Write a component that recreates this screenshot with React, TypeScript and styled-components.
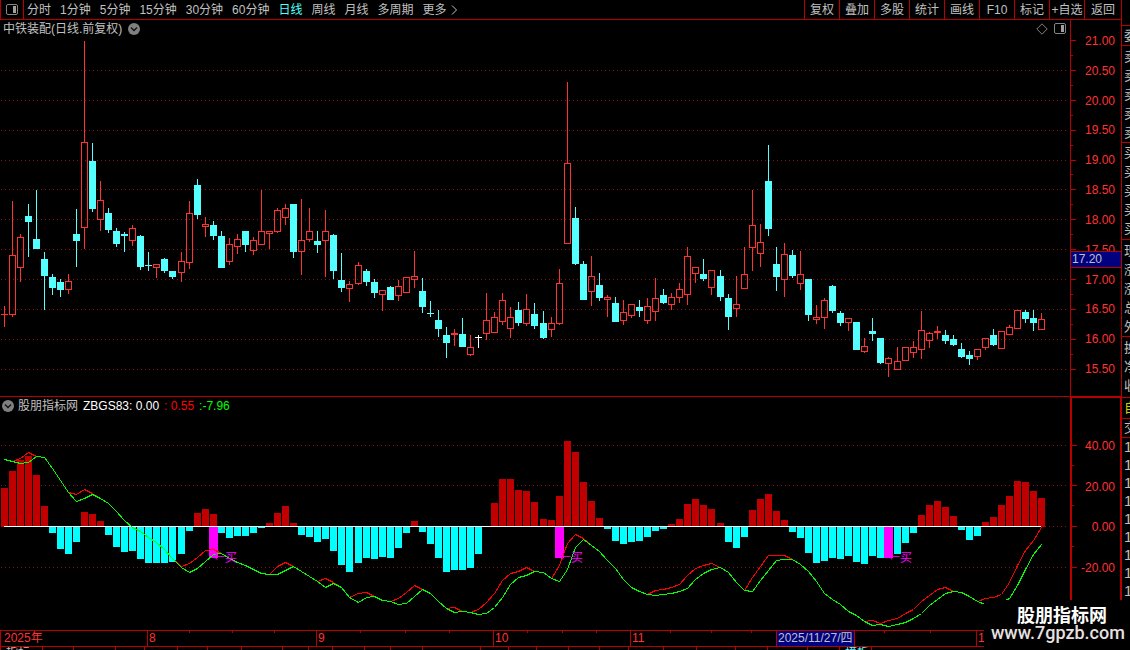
import React from "react";
import styled, { createGlobalStyle } from "styled-components";

const LINE = "#b80000";
const UP = "#ff3232";
const DOWN = "#54ffff";
const TEXT = "#c0c0c0";
const NAVY = "#000080";

const GlobalStyle = createGlobalStyle`
  * { box-sizing: border-box; }
  body {
    margin: 0;
    background: #000;
    color: ${TEXT};
    font: 12px/12px "Liberation Sans", "Noto Sans CJK SC", sans-serif;
  }
`;

/* Page frame */

const Page = styled.div`
  position: relative;
  display: flex;
  background: #000;
  overflow: hidden;
`;

const Main = styled.main`
  flex: 1;
  min-width: 0;
  display: flex;
  flex-direction: column;
`;

/* Toolbar */

const Toolbar = styled.header`
  display: flex;
  justify-content: space-between;
  height: 20px;
  border-bottom: 1px solid ${LINE};
`;

const PlainButton = styled.button`
  display: inline-flex;
  align-items: center;
  justify-content: center;
  padding: 0;
  border: 0;
  background: none;
  color: inherit;
  font: inherit;
  white-space: nowrap;
`;

const LayoutToggle = styled(PlainButton)`
  width: 24px;
  border: solid ${LINE};
  border-width: 0 1px;
`;

const Periods = styled.nav`
  display: flex;
  align-items: stretch;
`;

const PeriodList = styled.div`
  display: flex;
  gap: 9px;
  padding-left: 3px;
`;

const PeriodButton = styled(PlainButton)<{ $active?: boolean }>`
  color: ${(p) => (p.$active ? DOWN : TEXT)};
  gap: 4px;
`;

const Tools = styled.nav`
  display: flex;
`;

const ToolButton = styled(PlainButton)`
  width: 35px;
  border-left: 1px solid ${LINE};

  &:last-child {
    width: 37px;
  }
`;

/* Chart panes */

const Pane = styled.section<{ $divided?: boolean }>`
  display: flex;
  border-top: ${(p) => (p.$divided ? `1px solid ${LINE}` : "0")};
`;

const Plot = styled.div`
  flex: 1;
  min-width: 0;
  display: flex;
  flex-direction: column;
`;

const PlotHeader = styled.div<{ $compact?: boolean }>`
  display: flex;
  align-items: center;
  gap: ${(p) => (p.$compact ? 5 : 6)}px;
  height: ${(p) => (p.$compact ? 17 : 18)}px;
  padding: 0 3px 0 ${(p) => (p.$compact ? 2 : 3)}px;
  white-space: nowrap;
`;

const PlotTitle = styled.h1`
  margin: 0;
  font: inherit;
`;

const PlotTools = styled.div`
  display: flex;
  align-items: center;
  gap: 6px;
  margin-left: auto;
`;

const IndicatorLabel = styled.div`
  display: flex;
  gap: 4px;
  align-items: center;
`;

const Reading = styled.span<{ $color: string }>`
  color: ${(p) => p.$color};
`;

const ChartSvg = styled.svg`
  display: block;
  width: 100%;
`;

const Axis = styled.div<{ $heavy?: boolean }>`
  position: relative;
  display: grid;
  width: 51px;
  padding-right: ${(p) => (p.$heavy ? 0 : 1)}px;
  border: solid ${LINE};
  border-width: ${(p) => (p.$heavy ? "1px 1px 0 2px" : "0 0 0 1px")};
`;

const AxisTicks = styled.svg`
  grid-area: 1 / 1;
  display: block;
  width: 6px;
`;

const AxisLabels = styled.div<{ $top: number; $bottom: number }>`
  grid-area: 1 / 1;
  display: flex;
  flex-direction: column;
  justify-content: space-between;
  padding: ${(p) => p.$top}px 5px ${(p) => p.$bottom}px 0;
  color: ${UP};
  text-align: right;
`;

const PriceCursor = styled.div`
  position: absolute;
  left: 0;
  right: 0;
  top: 231px;
  height: 17px;
  padding-left: 1px;
  border: solid ${LINE};
  border-width: 1px 0;
  background: ${NAVY};
  line-height: 15px;
`;

/* Time axis */

const columns = (spans: number[]) => spans.map((s) => `${s}fr`).join(" ");

const TimeAxis = styled.div`
  display: grid;
  height: 17px;
  border: solid ${LINE};
  border-width: 1px 0;
`;

const TimeCells = styled.div<{ $spans: number[] }>`
  grid-area: 1 / 1;
  display: grid;
  grid-template-columns: ${(p) => columns(p.$spans)};
`;

const TimeCell = styled.div<{ $current?: boolean }>`
  min-width: 0;
  padding-left: 1px;
  border-left: 1px solid ${LINE};
  background: ${(p) => (p.$current ? NAVY : "transparent")};
  color: ${(p) => (p.$current ? TEXT : UP)};
  line-height: 15px;
  white-space: nowrap;

  &:first-child {
    padding-left: 3px;
  }
`;

const TimeTicks = styled.svg`
  grid-area: 1 / 1;
  display: block;
  width: 100%;
  height: 2px;
`;

const TabStrip = styled.div<{ $spans: number[] }>`
  display: grid;
  grid-template-columns: ${(p) => columns(p.$spans)};
  height: 3px;
  overflow: hidden;
`;

const TabCell = styled.div<{ $lit?: boolean }>`
  min-width: 0;
  padding-left: 5px;
  border-left: 1px solid ${LINE};
  color: ${(p) => (p.$lit ? DOWN : TEXT)};
  white-space: nowrap;
`;

/* Quote column */

const Side = styled.aside`
  width: 9px;
  padding-top: 25px;
  border-left: 1px solid ${LINE};
  overflow: hidden;
`;

const SideGroup = styled.div<{ $height: number; $color?: string; $size?: number; $top?: number }>`
  height: ${(p) => p.$height}px;
  padding: ${(p) => p.$top ?? 0}px 0 0 2px;
  border-top: 1px solid ${LINE};
  color: ${(p) => p.$color ?? TEXT};
  font-size: ${(p) => p.$size ?? 13}px;
  overflow: hidden;
`;

const SideRow = styled.div<{ $height: number }>`
  height: ${(p) => p.$height}px;
  line-height: ${(p) => p.$height}px;
`;

/* Site mark */

const SiteMark = styled.div`
  position: absolute;
  right: 0;
  bottom: 0;
  width: 146px;
  height: 50px;
  padding: 4px 0 0 7px;
  background: #000;
  color: #fff;
`;

const SiteName = styled.div`
  padding-left: 26px;
  font: bold 18px/20px "Noto Sans CJK SC", sans-serif;
`;

const SiteUrl = styled.div`
  color: #e8e0e0;
  font: 500 18px/18px Roboto, sans-serif;
`;

/* Data: one entry per trading day */

type Kind = "r" | "c" | "w";
type Candle = [Kind, number, number, number, number];

// kind, high, body top, body bottom, low
const CANDLES: Candle[] = [
  ["r", 306, 314, 315, 327], ["r", 201, 255, 315, 317], ["r", 234, 237, 268, 282],
  ["c", 204, 216, 222, 257], ["c", 190, 239, 249, 249], ["c", 252, 259, 276, 310],
  ["c", 274, 277, 288, 295], ["c", 279, 282, 290, 297], ["r", 274, 281, 290, 294],
  ["c", 209, 234, 241, 267], ["r", 41, 142, 228, 249], ["c", 143, 161, 209, 212],
  ["r", 181, 200, 220, 231], ["c", 208, 213, 230, 233], ["c", 228, 231, 244, 247],
  ["c", 232, 234, 236, 252], ["r", 225, 228, 241, 246], ["c", 235, 236, 267, 270],
  ["c", 252, 265, 266, 271], ["r", 264, 264, 268, 278], ["c", 258, 259, 271, 273],
  ["c", 271, 271, 277, 279], ["r", 252, 261, 273, 282], ["r", 201, 213, 263, 269],
  ["c", 179, 185, 215, 219], ["r", 217, 224, 227, 237], ["c", 221, 225, 236, 240],
  ["c", 231, 236, 268, 268], ["r", 238, 244, 262, 265], ["r", 234, 239, 247, 254],
  ["c", 231, 231, 245, 252], ["r", 237, 240, 251, 255], ["r", 190, 231, 245, 245],
  ["r", 231, 231, 234, 249], ["r", 208, 210, 232, 233], ["r", 204, 208, 218, 225],
  ["c", 204, 204, 252, 258], ["r", 199, 240, 252, 275], ["r", 208, 231, 240, 242],
  ["c", 231, 241, 245, 253], ["r", 210, 231, 241, 277], ["c", 234, 235, 271, 279],
  ["c", 253, 280, 288, 292], ["r", 281, 284, 289, 302], ["r", 262, 265, 284, 285],
  ["c", 269, 271, 282, 286], ["c", 279, 282, 293, 298], ["r", 290, 290, 295, 311],
  ["c", 286, 287, 300, 300], ["r", 280, 286, 296, 301], ["r", 277, 277, 293, 293],
  ["r", 251, 276, 280, 288], ["c", 278, 291, 307, 313], ["c", 301, 313, 314, 317],
  ["c", 310, 320, 329, 337], ["c", 327, 335, 343, 358], ["r", 329, 333, 335, 346],
  ["c", 318, 334, 347, 347], ["r", 335, 347, 355, 356], ["w", 335, 337, 338, 348],
  ["r", 293, 320, 334, 340], ["r", 312, 317, 333, 333], ["r", 293, 300, 322, 325],
  ["r", 307, 317, 329, 338], ["c", 302, 310, 323, 326], ["r", 294, 309, 324, 326],
  ["c", 303, 314, 326, 329], ["c", 311, 323, 338, 339], ["r", 317, 323, 330, 337],
  ["r", 269, 283, 324, 325], ["r", 82, 163, 244, 244], ["c", 207, 218, 264, 265],
  ["c", 261, 264, 300, 300], ["r", 256, 276, 292, 306], ["c", 273, 285, 298, 301],
  ["r", 295, 297, 300, 317], ["c", 297, 303, 322, 322], ["r", 300, 312, 321, 325],
  ["r", 304, 304, 316, 318], ["c", 300, 307, 311, 317], ["r", 298, 306, 321, 324],
  ["r", 278, 298, 312, 321], ["c", 289, 295, 303, 304], ["r", 293, 297, 305, 310],
  ["r", 283, 289, 298, 303], ["r", 247, 256, 295, 305], ["r", 267, 267, 274, 283],
  ["c", 259, 274, 279, 281], ["r", 270, 270, 288, 295], ["c", 270, 276, 297, 301],
  ["c", 294, 298, 317, 330], ["r", 276, 304, 309, 317], ["r", 247, 274, 289, 289],
  ["r", 190, 225, 248, 271], ["r", 224, 242, 254, 267], ["c", 145, 181, 229, 236],
  ["c", 247, 264, 277, 291], ["r", 243, 254, 280, 297], ["c", 250, 255, 276, 278],
  ["r", 251, 274, 284, 290], ["c", 279, 279, 315, 321], ["r", 305, 317, 320, 324],
  ["r", 298, 300, 318, 329], ["c", 285, 286, 311, 313], ["c", 311, 313, 323, 326],
  ["r", 318, 318, 323, 331], ["c", 322, 322, 350, 350], ["r", 338, 346, 352, 353],
  ["c", 318, 331, 334, 341], ["c", 338, 338, 363, 364], ["r", 357, 358, 364, 377],
  ["r", 347, 361, 370, 370], ["r", 347, 347, 361, 361], ["r", 341, 347, 353, 358],
  ["r", 311, 330, 350, 359], ["r", 332, 333, 341, 348], ["r", 326, 331, 333, 339],
  ["c", 330, 335, 341, 344], ["c", 335, 339, 345, 346], ["c", 343, 349, 357, 358],
  ["c", 351, 355, 359, 365], ["r", 349, 349, 357, 360], ["r", 338, 338, 348, 350],
  ["c", 329, 335, 345, 346], ["r", 331, 331, 349, 349], ["r", 325, 327, 335, 335],
  ["r", 310, 310, 329, 329], ["c", 310, 312, 319, 323], ["c", 310, 318, 323, 331],
  ["r", 313, 319, 330, 330],
];

const ZERO = 526;

// End of each histogram bar, above or below the zero line
const BARS = [
  488, 471, 460, 456, 475, 506, 533, 549, 554, 542, 512, 514, 521, 535, 547, 552, 551, 559, 563,
  563, 563, 562, 554, 531, 513, 509, 514, 533, 538, 536, 536, 533, 528, 523, 513, 506, 523, 535,
  537, 542, 539, 551, 565, 572, 563, 558, 559, 557, 558, 548, 533, 521, 532, 544, 558, 572, 570,
  570, 568, 554, 526, 503, 479, 479, 490, 491, 502, 519, 520, 496, 441, 452, 482, 501, 518, 529,
  541, 544, 542, 541, 537, 531, 529, 524, 519, 504, 499, 505, 509, 523, 542, 548, 537, 510, 499,
  494, 511, 520, 532, 538, 553, 563, 561, 558, 559, 556, 562, 564, 556, 558, 558, 554, 543, 533,
  515, 505, 501, 507, 516, 530, 540, 536, 522, 517, 505, 496, 481, 482, 491, 498,
];

const SLOW = [
  459, 461, 463, 462, 456, 457, 468, 480, 492, 501, 498, 494, 498, 503, 511, 520, 527, 531, 537,
  542, 549, 558, 567, 572, 568, 561, 554, 553, 558, 562, 565, 569, 573, 574, 574, 570, 566, 571,
  576, 581, 587, 583, 587, 597, 602, 597, 596, 600, 601, 604, 603, 596, 589, 593, 601, 608, 612,
  611, 612, 614, 613, 607, 597, 584, 577, 575, 571, 572, 578, 581, 569, 547, 539, 545, 551, 560,
  568, 579, 587, 591, 594, 595, 594, 593, 591, 588, 579, 573, 569, 567, 572, 582, 590, 591, 580,
  570, 560, 559, 559, 564, 571, 581, 593, 599, 604, 611, 615, 621, 625, 624, 626, 624, 622, 618,
  613, 605, 599, 593, 591, 592, 596, 601, 604, 605, 602, 598, 585, 569, 554, 544,
];

// Days on which the fast line departs from the slow one
const FAST_CHANGES: Record<number, number> = {
  2: 458, 3: 452, 9: 494, 10: 489, 11: 493, 22: 566, 23: 563, 24: 557, 25: 550, 26: 549, 34: 566,
  35: 562, 40: 578, 41: 582, 44: 593, 45: 592, 49: 598, 50: 592, 51: 585, 56: 607, 59: 609,
  60: 602, 61: 593, 62: 580, 63: 573, 64: 571, 65: 567, 69: 565, 70: 543, 71: 534, 72: 538,
  81: 590, 82: 589, 83: 587, 84: 584, 85: 575, 86: 568, 87: 565, 88: 563, 93: 577, 94: 566,
  95: 555, 96: 555, 97: 555, 108: 620, 109: 623, 110: 620, 111: 618, 112: 613, 113: 609, 114: 601,
  115: 595, 116: 589, 117: 587, 122: 598, 123: 597, 124: 594, 125: 582, 126: 565, 127: 550,
  128: 540, 129: 527,
};
const FAST = SLOW.map((y, i) => FAST_CHANGES[i] ?? y);

const SIGNAL_DAYS = [26, 69, 110];

const SHIFTS = [22, 44, 67, 89, 111];
const dayX = (i: number) => 4 + i * 8 + SHIFTS.filter((s) => i >= s).length;

const CANDLE_COLORS: Record<Kind, string> = { r: UP, c: DOWN, w: "#ffffff" };

const PRICES = ["21.00", "20.50", "20.00", "19.50", "19.00", "18.50", "18.00", "17.50", "17.00", "16.50", "16.00", "15.50"];
const PRICE_YS = [40, 70, 100, 130, 160, 189, 219, 249, 279, 309, 339, 369];
const LEVELS = ["40.00", "20.00", "0.00", "-20.00"];
const LEVEL_YS = [445, 485, 526, 567];

const PERIODS = ["分时", "1分钟", "5分钟", "15分钟", "30分钟", "60分钟", "日线", "周线", "月线", "多周期"];
const TOOLS = ["复权", "叠加", "多股", "统计", "画线", "F10", "标记", "+自选", "返回"];

const TIMES: { label: string; span: number; current?: boolean }[] = [
  { label: "2025年", span: 147 },
  { label: "8", span: 169 },
  { label: "9", span: 177 },
  { label: "10", span: 137 },
  { label: "11", span: 146 },
  { label: "2025/11/27/四", span: 78, current: true },
  { label: "", span: 122 },
  { label: "12", span: 145 },
];
const TIME_SPANS = TIMES.map((t) => t.span);
const WEEK_TICKS = [189, 232, 274, 360, 405, 449, 527, 562, 596, 670, 711, 751, 884, 930];
const TAB_SPANS = [42, 31, 42, 29, 33, 30, 34, 41, 26, 24, 32, 26, 32, 58, 28, 28, 32, 31, 29, 35, 33, 39, 32, 40, 32, 32, 250];
const TAB_NAMES: Record<number, string> = { 0: "指标", 25: "模板" };

interface SideGroupData {
  rows: string[];
  height: number;
  row: number;
  color?: string;
  size?: number;
  top?: number;
}

const SIDE_GROUPS: SideGroupData[] = [
  { rows: ["委"], height: 20, row: 19 },
  { rows: ["卖", "卖", "卖", "卖", "卖"], height: 97, row: 19, top: 1 },
  { rows: ["买", "买", "买", "买", "买"], height: 97, row: 19 },
  { rows: ["现", "涨", "涨", "总", "外"], height: 97, row: 19, top: 1 },
  { rows: ["换", "净", "收"], height: 61, row: 19, top: 1 },
  { rows: ["自"], height: 21, row: 19, color: "#d0d000" },
  { rows: ["交"], height: 19, row: 18 },
  { rows: ["1", "1", "1", "1", "1", "1", "1", "1", "1"], height: 213, row: 18, size: 15 },
];

/* Icons */

const PanelIcon = () => (
  <svg width="13" height="12" viewBox="0 0 13 12" aria-hidden="true">
    <rect x="0.5" y="0.5" width="11" height="10" rx="1.5" fill="none" stroke="#858585" />
    <rect x="7" y="2" width="3" height="7" fill="#a0a0a0" />
  </svg>
);

const DropIcon = () => (
  <svg width="12" height="12" viewBox="0 0 12 12" aria-hidden="true">
    <circle cx="6" cy="6" r="6" fill="#808080" />
    <path d="M3 4.5 L6 7.5 L9 4.5" fill="none" stroke="#101010" strokeWidth="1.3" />
  </svg>
);

const DiamondIcon = () => (
  <svg width="12" height="12" viewBox="0 0 12 12" aria-hidden="true">
    <path d="M6 0.8 L11.2 6 L6 11.2 L0.8 6 Z" fill="none" stroke="#909090" strokeWidth="0.9" />
  </svg>
);

const MoreIcon = () => (
  <svg width="7" height="10" viewBox="0 0 7 10" aria-hidden="true">
    <path d="M1 0.5 L5.5 5 L1 9.5" fill="none" stroke={TEXT} />
  </svg>
);

/* Chart parts */

const GridLine = ({ y }: { y: number }) => (
  <line x1="1" x2="1067" y1={y + 0.5} y2={y + 0.5} stroke="#8c1010" strokeDasharray="1 3" />
);

const CandleMark = ({ candle, x }: { candle: Candle; x: number }) => {
  const [kind, high, top, bottom, low] = candle;
  const color = CANDLE_COLORS[kind];
  const hollow = kind === "r" && bottom - top > 2;
  return (
    <g fill={color}>
      <rect x={x} y={high} width="1" height={top - high} />
      <rect x={x} y={bottom} width="1" height={low - bottom} />
      {hollow ? (
        <rect x={x - 2.5} y={top + 0.5} width="6" height={bottom - top - 1} fill="none" stroke={color} />
      ) : (
        <rect x={x - 3} y={top} width="7" height={bottom - top} />
      )}
    </g>
  );
};

const toPoints = (ys: number[]) => ys.map((y, i) => `${dayX(i) + 0.5},${y + 0.5}`).join(" ");

const PriceChart = () => (
  <ChartSvg height="358" viewBox="0 38 1070 358" preserveAspectRatio="none" shapeRendering="crispEdges">
    {PRICE_YS.slice(1).map((y) => (
      <GridLine key={y} y={y} />
    ))}
    {CANDLES.map((candle, i) => (
      <CandleMark key={i} candle={candle} x={dayX(i)} />
    ))}
  </ChartSvg>
);

const IndicatorChart = () => (
  <ChartSvg height="216" viewBox="0 414 1070 216" preserveAspectRatio="none" shapeRendering="crispEdges">
    {LEVEL_YS.map((y) => (
      <GridLine key={y} y={y} />
    ))}
    {BARS.map((end, i) => (
      <rect
        key={i}
        x={dayX(i) - 3}
        y={Math.min(end, ZERO)}
        width="7"
        height={end < ZERO ? ZERO + 1 - end : end - ZERO}
        fill={end < ZERO ? "#c00000" : "#00ffff"}
      />
    ))}
    {SIGNAL_DAYS.map((day) => (
      <rect key={day} x={dayX(day) - 4} y={ZERO} width="9" height="32" fill="#ff00ff" />
    ))}
    <rect x="4" y={ZERO} width="1037" height="1" fill="#ffffff" />
    <polyline points={toPoints(FAST)} fill="none" stroke="#ff0000" />
    <polyline points={toPoints(SLOW)} fill="none" stroke="#00ff00" />
    {SIGNAL_DAYS.map((day) => (
      <text key={day} x={dayX(day)} y="562" fill="#ff00ff" fontSize="12" fontFamily="Noto Sans CJK SC, sans-serif">
        ←买
      </text>
    ))}
  </ChartSvg>
);

const Ticks = ({ ys, from, height }: { ys: number[]; from: number; height: number }) => (
  <AxisTicks height={height} viewBox={`0 ${from} 6 ${height}`} fill={LINE} shapeRendering="crispEdges">
    {ys.map((y, i) => (
      <g key={y}>
        <rect x="0" y={y} width="5" height="1" />
        {i < ys.length - 1 && <rect x="0" y={Math.floor((y + ys[i + 1]) / 2)} width="2" height="1" />}
      </g>
    ))}
  </AxisTicks>
);

export default function App() {
  return (
    <>
      <GlobalStyle />
      <Page>
        <Main>
          <Toolbar>
            <Periods>
              <LayoutToggle aria-label="布局">
                <PanelIcon />
              </LayoutToggle>
              <PeriodList>
                {PERIODS.map((label) => (
                  <PeriodButton key={label} $active={label === "日线"}>
                    {label}
                  </PeriodButton>
                ))}
                <PeriodButton>
                  更多
                  <MoreIcon />
                </PeriodButton>
              </PeriodList>
            </Periods>
            <Tools>
              {TOOLS.map((label) => (
                <ToolButton key={label}>{label}</ToolButton>
              ))}
            </Tools>
          </Toolbar>

          <Pane>
            <Plot>
              <PlotHeader>
                <PlotTitle>中铁装配(日线.前复权)</PlotTitle>
                <PlainButton aria-label="展开">
                  <DropIcon />
                </PlainButton>
                <PlotTools>
                  <PlainButton aria-label="标记点">
                    <DiamondIcon />
                  </PlainButton>
                  <PlainButton aria-label="侧栏">
                    <PanelIcon />
                  </PlainButton>
                </PlotTools>
              </PlotHeader>
              <PriceChart />
            </Plot>
            <Axis>
              <Ticks ys={PRICE_YS} from={20} height={376} />
              <AxisLabels $top={15} $bottom={21}>
                {PRICES.map((p) => (
                  <span key={p}>{p}</span>
                ))}
              </AxisLabels>
              <PriceCursor>17.20</PriceCursor>
            </Axis>
          </Pane>

          <Pane $divided>
            <Plot>
              <PlotHeader $compact>
                <IndicatorLabel>
                  <PlainButton aria-label="指标菜单">
                    <DropIcon />
                  </PlainButton>
                  <span>股朋指标网</span>
                </IndicatorLabel>
                <Reading $color="#ffffff">ZBGS83: 0.00</Reading>
                <Reading $color="#ff0000">: 0.55</Reading>
                <Reading $color="#00ff00">:-7.96</Reading>
              </PlotHeader>
              <IndicatorChart />
            </Plot>
            <Axis $heavy>
              <Ticks ys={LEVEL_YS} from={398} height={232} />
              <AxisLabels $top={42} $bottom={56}>
                {LEVELS.map((l) => (
                  <span key={l}>{l}</span>
                ))}
              </AxisLabels>
            </Axis>
          </Pane>

          <TimeAxis>
            <TimeCells $spans={TIME_SPANS}>
              {TIMES.map((t, i) => (
                <TimeCell key={i} $current={t.current}>
                  {t.label}
                </TimeCell>
              ))}
            </TimeCells>
            <TimeTicks viewBox="0 0 1121 2" preserveAspectRatio="none" fill={LINE} shapeRendering="crispEdges">
              {WEEK_TICKS.map((x) => (
                <rect key={x} x={x} y="0" width="1" height="2" />
              ))}
            </TimeTicks>
          </TimeAxis>
          <TabStrip $spans={TAB_SPANS}>
            {TAB_SPANS.map((_, i) => (
              <TabCell key={i} $lit={i === 25}>
                {TAB_NAMES[i]}
              </TabCell>
            ))}
          </TabStrip>
        </Main>

        <Side>
          {SIDE_GROUPS.map((group, g) => (
            <SideGroup key={g} $height={group.height} $color={group.color} $size={group.size} $top={group.top}>
              {group.rows.map((row, i) => (
                <SideRow key={i} $height={group.row}>
                  {row}
                </SideRow>
              ))}
            </SideGroup>
          ))}
        </Side>

        <SiteMark>
          <SiteName>股朋指标网</SiteName>
          <SiteUrl>www.7gpzb.com</SiteUrl>
        </SiteMark>
      </Page>
    </>
  );
}
